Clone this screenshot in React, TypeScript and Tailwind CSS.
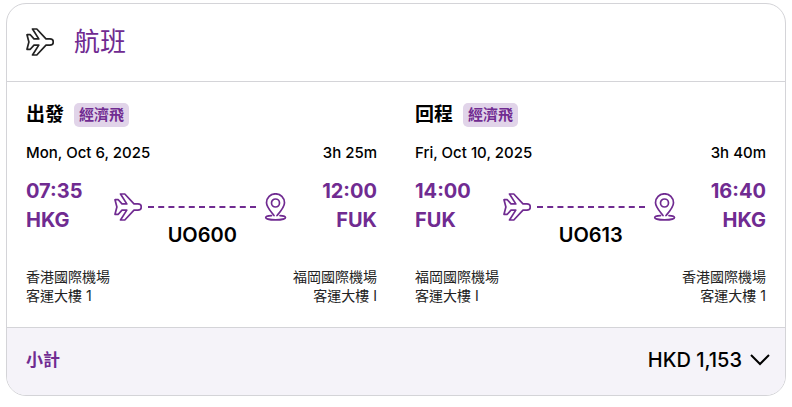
import { ReactNode } from "react"

type Stop = {
  time: string
  code: string
  airport: string
  terminal: string
}

type Flight = {
  label: string
  fare: string
  date: string
  duration: string
  number: string
  from: Stop
  to: Stop
}

const flights: Flight[] = [
  {
    label: "出發",
    fare: "經濟飛",
    date: "Mon, Oct 6, 2025",
    duration: "3h 25m",
    number: "UO600",
    from: { time: "07:35", code: "HKG", airport: "香港國際機場", terminal: "客運大樓 1" },
    to: { time: "12:00", code: "FUK", airport: "福岡國際機場", terminal: "客運大樓 I" },
  },
  {
    label: "回程",
    fare: "經濟飛",
    date: "Fri, Oct 10, 2025",
    duration: "3h 40m",
    number: "UO613",
    from: { time: "14:00", code: "FUK", airport: "福岡國際機場", terminal: "客運大樓 I" },
    to: { time: "16:40", code: "HKG", airport: "香港國際機場", terminal: "客運大樓 1" },
  },
]

function Icon({ className, children }: { className?: string; children: ReactNode }) {
  return (
    <svg
      viewBox="0 0 28 28"
      fill="none"
      stroke="currentColor"
      strokeWidth="1.7"
      strokeLinejoin="round"
      strokeLinecap="round"
      aria-hidden="true"
      className={className}
    >
      {children}
    </svg>
  )
}

function PlaneIcon({ className }: { className?: string }) {
  return (
    <Icon className={className}>
      <path d="M6.5 1h4.300L20 10.900h4c2 0 3.300 1.300 3.300 3.100s-1.300 3.100-3.300 3.100h-4L10.800 27H6.500l6.300-9.900H8L4.300 21.300H1L2.900 14 1 6.700h3.300L8 10.900h4.800Z" />
    </Icon>
  )
}

function PinIcon({ className }: { className?: string }) {
  return (
    <Icon className={className}>
      <circle cx="13.500" cy="10" r="4" />
      <path d="M12 22.500C8 17.500 4.500 14 4.500 9.800a9 9 0 0 1 18 0c0 4.400-4 8.700-7.500 12.700M9.500 22.600c-3.500.2-5.800.8-5.800 1.800 0 1.400 4.200 2.500 9.900 2.500s9.900-1.100 9.900-2.500c0-1-2.200-1.600-5.500-1.800" />
    </Icon>
  )
}

function FlightLeg({ flight }: { flight: Flight }) {
  return (
    <section>
      <div className="flex items-center gap-2.5">
        <h3 className="text-[19px] leading-6 font-bold">{flight.label}</h3>
        <span className="rounded-[5px] bg-[#e1d4e9] px-[5px] text-[15px] leading-6 font-bold text-[#702b91]">
          {flight.fare}
        </span>
      </div>

      <div className="mt-[14px] flex justify-between text-[15px] leading-6 font-medium">
        <span>{flight.date}</span>
        <span>{flight.duration}</span>
      </div>

      <div className="mt-3 flex justify-between">
        <div className="text-xl leading-[29px] font-bold text-[#702b91]">
          <p>{flight.from.time}</p>
          <p>{flight.from.code}</p>
        </div>
        <div className="mx-8 flex-1 pt-4">
          <div className="flex items-center gap-1.5 text-[#702b91]">
            <PlaneIcon className="size-7 shrink-0" />
            <div className="flex-1 border-t-2 border-dashed border-[#702b91]" />
            <PinIcon className="size-7 shrink-0" />
          </div>
          <p className="text-center text-xl leading-7 font-semibold">{flight.number}</p>
        </div>
        <div className="text-right text-xl leading-[29px] font-bold text-[#702b91]">
          <p>{flight.to.time}</p>
          <p>{flight.to.code}</p>
        </div>
      </div>

      <div className="mt-[18px] flex justify-between text-[14px] leading-[19px] text-[#222222]">
        <div>
          <p>{flight.from.airport}</p>
          <p>{flight.from.terminal}</p>
        </div>
        <div className="text-right">
          <p>{flight.to.airport}</p>
          <p>{flight.to.terminal}</p>
        </div>
      </div>
    </section>
  )
}

export default function App() {
  return (
    <main className="bg-white px-1.5 py-[3px] font-['Inter','Noto_Sans_CJK_TC',sans-serif] text-black" lang="zh-Hant">
      <article className="overflow-hidden rounded-[20px] border border-[#d4d4d8]">
        <header className="flex items-center gap-5 border-b border-[#d4d4d8] px-[19px] pt-[18px] pb-[19px]">
          <PlaneIcon className="size-7 text-[#222222]" />
          <h2 className="text-[26px] leading-10 text-[#702b91]">航班</h2>
        </header>

        <div className="grid grid-cols-2 gap-[38px] px-[19px] pt-[21px] pb-[22px]">
          {flights.map((flight) => (
            <FlightLeg key={flight.number} flight={flight} />
          ))}
        </div>

        <footer className="flex items-center justify-between border-t border-[#d4d4d8] bg-[#f5f3f9] pt-[14px] pb-[17px] pr-[15px] pl-[19px]">
          <span className="text-[17px] leading-9 font-bold text-[#702b91]">小計</span>
          <button type="button" className="flex items-center gap-2 text-xl leading-9 font-medium">
            HKD 1,153
            <svg viewBox="0 0 20 12" fill="none" stroke="currentColor" className="h-3 w-5" aria-hidden="true">
              <path strokeWidth="2" d="M1 1l9 9 9-9" />
            </svg>
          </button>
        </footer>
      </article>
    </main>
  )
}
